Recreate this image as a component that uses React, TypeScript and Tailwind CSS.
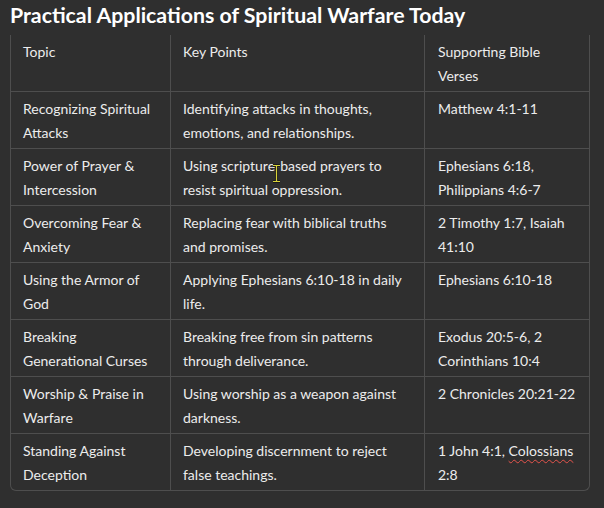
import React from "react";

const rows: { t: string[]; k: string[]; v: React.ReactNode[] }[] = [
  { t: ["Recognizing Spiritual", "Attacks"], k: ["Identifying attacks in thoughts,", "emotions, and relationships."], v: ["Matthew 4:1-11"] },
  { t: ["Power of Prayer &", "Intercession"], k: ["Using scripture-based prayers to", "resist spiritual oppression."], v: ["Ephesians 6:18,", "Philippians 4:6-7"] },
  { t: ["Overcoming Fear &", "Anxiety"], k: ["Replacing fear with biblical truths", "and promises."], v: ["2 Timothy 1:7, Isaiah", "41:10"] },
  { t: ["Using the Armor of", "God"], k: ["Applying Ephesians 6:10-18 in daily", "life."], v: ["Ephesians 6:10-18"] },
  { t: ["Breaking", "Generational Curses"], k: ["Breaking free from sin patterns", "through deliverance."], v: ["Exodus 20:5-6, 2", "Corinthians 10:4"] },
  { t: ["Worship & Praise in", "Warfare"], k: ["Using worship as a weapon against", "darkness."], v: ["2 Chronicles 20:21-22"] },
  {
    t: ["Standing Against", "Deception"],
    k: ["Developing discernment to reject", "false teachings."],
    v: [
      <>
        1 John 4:1, <span className="underline decoration-wavy decoration-[#e5534b] decoration-1 underline-offset-[3px]">Colossians</span>
      </>,
      "2:8",
    ],
  },
];

function Lines({ lines }: { lines: React.ReactNode[] }) {
  return (
    <>
      {lines.map((l, i) => (
        <div key={i} className="whitespace-nowrap h-6">
          {l}
        </div>
      ))}
    </>
  );
}

export default function App() {
  return (
    <div
      className="w-[604px] h-[508px] bg-[#2f2f2f] text-[#ececec] relative overflow-hidden"
      style={{ fontFamily: 'Lato, "Noto Sans", sans-serif' }}
    >
      <h1 className="pl-[10px] pt-[1px] h-[35px] text-[21.3px] font-bold text-white leading-[28px]">
        Practical Applications of Spiritual Warfare Today
      </h1>
      <div className="ml-[10px] w-[580px] border-l border-r border-b border-[#4e4e4e] rounded-b-[6px] text-[14px] leading-6">
        <div className="grid grid-cols-[159px_254px_1fr] h-[56px]">
          <div className="pl-3 pt-[5px]">
            <Lines lines={["Topic"]} />
          </div>
          <div className="pl-3 pt-[5px] border-l border-[#4e4e4e]">
            <Lines lines={["Key Points"]} />
          </div>
          <div className="pl-[13px] pt-[5px] border-l border-[#4e4e4e]">
            <Lines lines={["Supporting Bible", "Verses"]} />
          </div>
        </div>
        {rows.map((r, i) => (
          <div key={i} className="grid grid-cols-[159px_254px_1fr] h-[57px] border-t border-[#4e4e4e]">
            <div className="pl-3 pt-[5px]">
              <Lines lines={r.t} />
            </div>
            <div className="pl-3 pt-[5px] border-l border-[#4e4e4e]">
              <Lines lines={r.k} />
            </div>
            <div className="pl-[13px] pt-[5px] border-l border-[#4e4e4e]">
              <Lines lines={r.v} />
            </div>
          </div>
        ))}
      </div>
      <svg className="absolute left-[272px] top-[164px]" width="9" height="20" viewBox="0 0 9 20">
        <path d="M1 1.5h7M4.5 1.5v16M1 17.5h7" stroke="#1a1a1a" strokeWidth="3" fill="none" />
        <path d="M1 1.5h7M4.5 1.5v16M1 17.5h7" stroke="#d8d23a" strokeWidth="1.2" fill="none" />
      </svg>
    </div>
  );
}
